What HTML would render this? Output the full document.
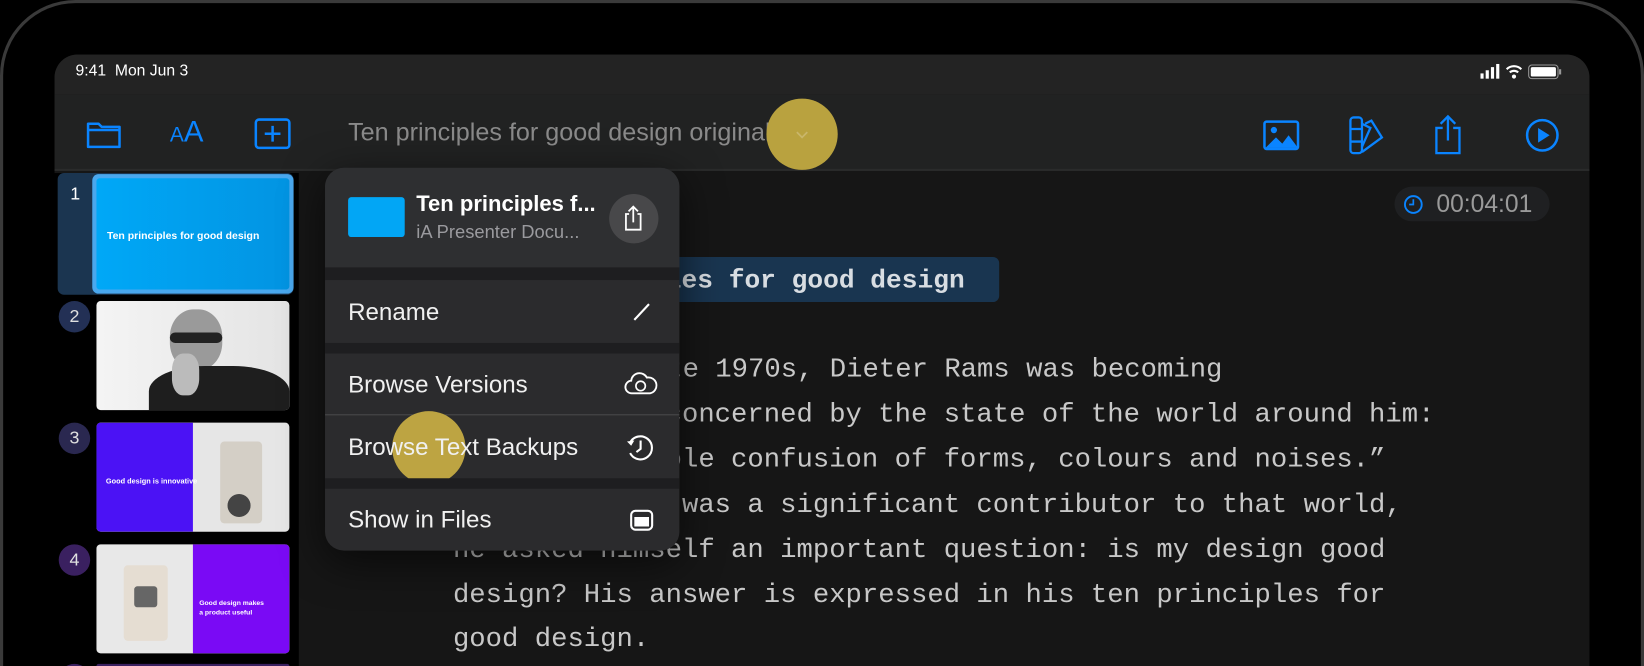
<!DOCTYPE html>
<html><head><meta charset="utf-8"><style>
*{margin:0;padding:0;box-sizing:border-box}
html,body{width:1644px;height:666px;overflow:hidden;background:#000}
#o{position:absolute;left:0;top:0;width:1644px;height:666px;overflow:hidden}
#w{position:absolute;left:0;top:0;width:1568px;height:635px;overflow:hidden;transform:scale(1.04847,1.0488);transform-origin:0 0;font-family:"Liberation Sans",sans-serif}
.dev{position:absolute;left:0;top:0;width:1568px;height:635px;border:3px solid #3a3a3a;border-bottom:none;border-radius:72px 72px 0 0;background:#000;}
.scr{position:absolute;left:52px;top:52px;width:1464px;height:583px;border-radius:22px 22px 0 0;overflow:hidden;background:#161616}
.sb{position:absolute;left:0;top:0;width:100%;height:38px;background:#232323;color:#fff;font-size:15px}
.tb{position:absolute;left:0;top:38px;width:100%;height:73px;background:#212222;border-bottom:2px solid #2a2b2b}
.side{position:absolute;left:0;top:113px;width:233px;height:470px;background:#000;overflow:hidden}
.abs{position:absolute}
.mono{font-family:"Liberation Mono",monospace;color:#c8c8c8;font-size:26px;white-space:pre;position:absolute}
.num{position:absolute;left:4px;width:30px;height:30px;border-radius:50%;color:#e0e0e0;font-size:17px;text-align:center;line-height:30px}
.th{position:absolute;left:40px;width:184px;height:104px;border-radius:4px;overflow:hidden}
.menu{position:absolute;left:258px;top:108px;width:338px;height:365px;border-radius:18px;background:#2b2b2d;overflow:hidden;box-shadow:0 10px 40px rgba(0,0,0,.6)}
.mi{position:absolute;left:0;width:338px;color:#f0f0f0;font-size:23px;padding-left:22px}
.band{position:absolute;left:0;width:338px;background:#1e1e20}
</style></head><body><div id="o"><div id="w">
<div class="dev"></div>
<div class="scr">
 <div class="sb"><span class="abs" style="left:20px;top:7px">9:41&nbsp;&nbsp;Mon Jun 3</span>
  <svg class="abs" style="left:1360px;top:8px" width="80" height="18" viewBox="0 0 80 18">
   <rect x="0" y="10" width="3" height="5" fill="#fff"/><rect x="5" y="7" width="3" height="8" fill="#fff"/><rect x="10" y="4" width="3" height="11" fill="#fff"/><rect x="15" y="1" width="3" height="14" fill="#fff"/>
   <path d="M25 6a10 10 0 0 1 14 0M28 9a6 6 0 0 1 8 0" stroke="#fff" stroke-width="2" fill="none"/><circle cx="32" cy="13" r="2" fill="#fff"/>
   <rect x="46" y="2" width="28" height="13" rx="3" stroke="#999" fill="none"/><rect x="48" y="4" width="24" height="9" rx="1.5" fill="#fff"/><rect x="75" y="6" width="2" height="5" fill="#999"/>
  </svg>
 </div>
 <div class="tb">
  <svg class="abs" style="left:30px;top:24px" width="34" height="28" viewBox="0 0 34 28"><path d="M2 4h10l3 3h17v19H2z M2 10h30" stroke="#0a84ff" stroke-width="2.4" fill="none" stroke-linejoin="round"/></svg>
  <span class="abs" style="left:110px;top:20px;color:#0a84ff;font-size:20px">A<span style="font-size:28px">A</span></span>
  <svg class="abs" style="left:190px;top:22px" width="36" height="32" viewBox="0 0 36 32"><rect x="2" y="2" width="32" height="27" rx="3" stroke="#0a84ff" stroke-width="2.4" fill="none"/><path d="M18 8v15M10.5 15.5h15" stroke="#0a84ff" stroke-width="2.4"/></svg>
  <span class="abs" style="left:280px;top:23px;color:#8a8a8a;font-size:24px">Ten principles for good design original</span>
  <div class="abs" style="left:679px;top:4px;width:68px;height:68px;border-radius:50%;background:#b9a23f"></div>
  <svg class="abs" style="left:703px;top:32px" width="20" height="14"><path d="M5 4l5 5 5-5" stroke="#c9b66a" stroke-width="1.6" fill="none"/></svg>
  <svg class="abs" style="left:1152px;top:24px" width="36" height="30" viewBox="0 0 36 30"><rect x="2" y="2" width="32" height="26" rx="2" stroke="#0a84ff" stroke-width="2.4" fill="none"/><circle cx="11" cy="10" r="3" fill="#0a84ff"/><path d="M3 27l10-10 6 6 6-8 9 12z" fill="#0a84ff"/></svg>
  <svg class="abs" style="left:1234px;top:20px" width="36" height="38" viewBox="0 0 36 38"><rect x="2" y="2" width="11" height="34" rx="3" stroke="#0a84ff" stroke-width="2.2" fill="none"/><path d="M2 13h11M2 25h11M13 8l8 4-8 18M16 8l6-3 10 16-19 14" stroke="#0a84ff" stroke-width="2.2" fill="none"/></svg>
  <svg class="abs" style="left:1314px;top:18px" width="30" height="40" viewBox="0 0 30 40"><path d="M10 14H4v24h22V14h-6M15 26V3M8 10l7-7 7 7" stroke="#0a84ff" stroke-width="2.2" fill="none"/></svg>
  <svg class="abs" style="left:1402px;top:22px" width="34" height="34" viewBox="0 0 34 34"><circle cx="17" cy="17" r="14.5" stroke="#0a84ff" stroke-width="2.4" fill="none"/><path d="M13 10v14l11-7z" fill="#0a84ff"/></svg>
 </div>
 <div class="side">
  <div class="abs" style="left:3px;top:0;width:225px;height:116px;background:#1b3550;border-radius:6px"></div>
  <span class="abs" style="left:15px;top:10px;color:#fff;font-size:17px">1</span>
  <div class="abs" style="left:36px;top:1px;width:192px;height:114px;border-radius:6px;background:#4aa8ee;padding:4px"><div style="width:100%;height:100%;background:linear-gradient(90deg,#00a8f7,#0294e2);border-radius:3px;position:relative"><span class="abs" style="left:10px;top:50px;color:#fff;font-size:10px;font-weight:bold">Ten principles for good design</span></div></div>
  <div class="num" style="top:122px;background:#233055">2</div>
  <div class="th" style="top:122px;background:linear-gradient(90deg,#f4f4f4,#e4e4e4)">
   <div class="abs" style="left:70px;top:8px;width:50px;height:58px;border-radius:45%;background:#9a9a9a"></div>
   <div class="abs" style="left:70px;top:30px;width:50px;height:10px;border-radius:5px;background:#222"></div>
   <div class="abs" style="left:50px;top:62px;width:134px;height:60px;border-radius:40% 40% 0 0;background:#1e1e1e"></div>
   <div class="abs" style="left:72px;top:50px;width:26px;height:40px;border-radius:40%;background:#bbb"></div>
  </div>
  <div class="num" style="top:238px;background:#2a2850">3</div>
  <div class="th" style="top:238px;background:#e6e6e6"><div class="abs" style="left:0;top:0;width:92px;height:104px;background:#4b12f5"></div><span class="abs" style="left:9px;top:53px;color:#fff;font-size:7px;font-weight:bold">Good design is innovative</span><div class="abs" style="left:118px;top:18px;width:40px;height:78px;border-radius:4px;background:#d4cfc6"></div><div class="abs" style="left:125px;top:68px;width:22px;height:22px;border-radius:50%;background:#444"></div></div>
  <div class="num" style="top:354px;background:#3a2060">4</div>
  <div class="th" style="top:354px;background:#e8e8e8"><div class="abs" style="left:92px;top:0;width:92px;height:104px;background:#7a0af5"></div><span class="abs" style="left:98px;top:52px;color:#fff;font-size:6.5px;font-weight:bold;line-height:9px">Good design makes<br>a product useful</span><div class="abs" style="left:26px;top:20px;width:42px;height:72px;border-radius:4px;background:#e5ddd2"></div><div class="abs" style="left:36px;top:40px;width:22px;height:20px;background:#666;border-radius:3px"></div></div>
  <div class="num" style="top:468px;background:#3a2060"></div>
  <div class="th" style="top:468px;background:#3a2060;height:4px"></div>
 </div>
 <div class="abs" style="left:1278px;top:126px;width:148px;height:33px;border-radius:17px;background:#1f2022"></div>
 <svg class="abs" style="left:1286px;top:133px" width="20" height="20"><circle cx="10" cy="10" r="8" stroke="#0a84ff" stroke-width="1.8" fill="none"/><path d="M10 5v5H6" stroke="#0a84ff" stroke-width="1.6" fill="none"/></svg>
 <span class="abs" style="left:1318px;top:129px;color:#9a9a9a;font-size:23.5px">00:04:01</span>
 <div class="abs" style="left:400px;top:193px;width:501px;height:43px;border-radius:6px;background:#193550"></div>
 <div class="mono" style="left:418px;top:201px;font-weight:bold;font-size:25px;color:#d8dde2">Ten principles for good design</div>
 <div class="mono" style="left:443px;top:285px">In the late 1970s, Dieter Rams was becoming</div>
 <div class="mono" style="left:380px;top:328px">increasingly concerned by the state of the world around him:</div>
 <div class="mono" style="left:380px;top:371px">“An impenetrable confusion of forms, colours and noises.”</div>
 <div class="mono" style="left:380px;top:414px">Aware that he was a significant contributor to that world,</div>
 <div class="mono" style="left:380px;top:457px">he asked himself an important question: is my design good</div>
 <div class="mono" style="left:380px;top:500px">design? His answer is expressed in his ten principles for</div>
 <div class="mono" style="left:380px;top:542px">good design.</div>
 <div class="menu">
  <div class="abs" style="left:0;top:0;width:338px;height:95px;background:#2e2f31"></div>
  <div class="abs" style="left:22px;top:28px;width:54px;height:38px;border-radius:3px;background:#02a6f5"></div>
  <span class="abs" style="left:87px;top:23px;color:#fff;font-size:21px;font-weight:bold">Ten principles f...</span>
  <span class="abs" style="left:87px;top:51px;color:#9a9a9e;font-size:17.5px">iA Presenter Docu...</span>
  <div class="abs" style="left:271px;top:25px;width:47px;height:47px;border-radius:50%;background:#48484a"></div>
  <svg class="abs" style="left:284px;top:35px" width="20" height="26" viewBox="0 0 20 26"><path d="M6 9H3v15h14V9h-3M10 17V2M5.5 6.5L10 2l4.5 4.5" stroke="#fff" stroke-width="1.7" fill="none"/></svg>
  <div class="band" style="top:95px;height:12px"></div>
  <div class="mi" style="top:107px;height:60px;line-height:60px">Rename</div>
  <svg class="abs" style="left:290px;top:125px" width="24" height="24"><path d="M5 20L19 5" stroke="#fff" stroke-width="2"/></svg>
  <div class="band" style="top:167px;height:10px"></div>
  <div class="mi" style="top:177px;height:59px;line-height:59px;border-bottom:1px solid #4a4a4c">Browse Versions</div>
  <svg class="abs" style="left:285px;top:193px" width="32" height="26" viewBox="0 0 32 26"><path d="M8 22a6 6 0 0 1-1-12 8 8 0 0 1 15-3 7 7 0 0 1 3 15z" stroke="#fff" stroke-width="1.8" fill="none"/><circle cx="16" cy="15" r="4.5" stroke="#fff" stroke-width="1.6" fill="none"/></svg>
  <div class="abs" style="left:64px;top:232px;width:70px;height:70px;border-radius:50%;background:#bda442"></div>
  <div class="mi" style="top:237px;height:59px;line-height:59px">Browse Text Backups</div>
  <svg class="abs" style="left:286px;top:253px" width="28" height="28" viewBox="0 0 28 28"><path d="M5 9a11 11 0 1 1 0 10" stroke="#fff" stroke-width="2" fill="none"/><path d="M2 8l4 4 3-5z" fill="#fff"/><path d="M15 7v8l-4 3" stroke="#fff" stroke-width="2" fill="none"/></svg>
  <div class="band" style="top:296px;height:10px"></div>
  <div class="mi" style="top:306px;height:59px;line-height:59px">Show in Files</div>
  <svg class="abs" style="left:290px;top:325px" width="24" height="22" viewBox="0 0 24 22"><rect x="2" y="2" width="20" height="18" rx="4" stroke="#fff" stroke-width="2" fill="none"/><path d="M5 8h14v9H5z" fill="#fff"/></svg>
 </div>
</div>
</div></div></body></html>
